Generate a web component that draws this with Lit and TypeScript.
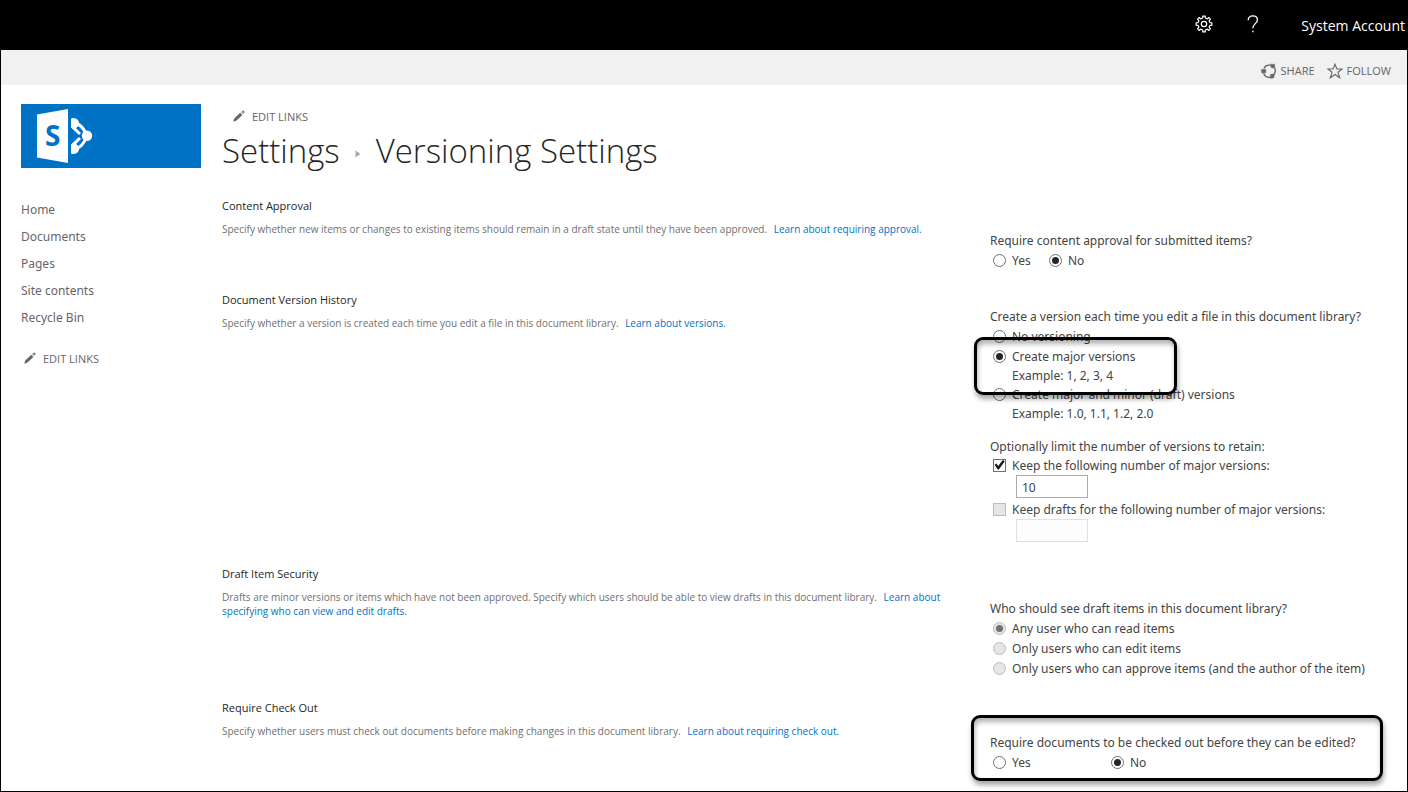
import { LitElement, html, css, svg } from "lit";
import { customElement, property } from "lit/decorators.js";

const pencil = html`<svg class="pencil" viewBox="0 0 12 12" width="12" height="12" aria-hidden="true">
  <path d="M0.2 11.8 1.3 8.4 7.2 2.7 9.4 4.9 3.5 10.6Z" fill="currentColor" />
  <path d="M8 2 8.6 1.4 10.7 3.5 10.1 4.1Z" fill="currentColor" />
  <path d="M9.1 0.9Q10 0 11 0.9 12 1.9 11.2 2.9L10.9 3.1 8.9 1.1Z" fill="currentColor" />
</svg>`;

/** Outline of a cog, centred on the origin. */
function cogPath(teeth: number, outer: number, inner: number): string {
  const step = (Math.PI * 2) / teeth;
  const at = (r: number, a: number) => `${(r * Math.cos(a)).toFixed(2)} ${(r * Math.sin(a)).toFixed(2)}`;
  let d = "";
  for (let i = 0; i < teeth; i++) {
    const a = i * step - Math.PI / 2;
    d += `${i ? "L" : "M"}${at(inner, a - step * 0.27)}L${at(outer, a - step * 0.2)}L${at(outer, a + step * 0.2)}L${at(inner, a + step * 0.27)}`;
  }
  return d + "Z";
}

@customElement("settings-section")
export class SettingsSection extends LitElement {
  static styles = css`
    :host {
      display: grid;
      grid-template-columns: minmax(0, 1fr) 417px;
      padding-bottom: 19px;
    }
    :host(:last-of-type) {
      padding-bottom: 0;
    }
    .about {
      padding-right: 40px;
    }
    h2 {
      margin: 0 0 6px;
      font-size: 11px;
      line-height: 20px;
      font-weight: 400;
      color: #262626;
    }
    p {
      margin: 0;
      font-size: 10px;
      line-height: 14px;
      color: #707070;
    }
    a {
      margin-left: 4px;
      color: #0072c6;
      text-decoration: none;
    }
    .controls {
      padding-top: 35px;
    }
    .controls.compact {
      padding-top: 17px;
    }
  `;
  @property() heading = "";
  @property() text = "";
  @property() link = "";
  @property({ type: Boolean }) compact = false;

  render() {
    return html`
      <div class="about">
        <h2>${this.heading}</h2>
        <p>${this.text} <a href="#">${this.link}</a></p>
      </div>
      <div class="controls ${this.compact ? "compact" : ""}"><slot></slot></div>
    `;
  }
}

@customElement("app-root")
export class AppRoot extends LitElement {
  static styles = css`
    * {
      box-sizing: border-box;
    }
    :host {
      display: block;
      box-sizing: border-box;
      min-height: 100vh;
      border: 1px solid #000;
      background: #fff;
      color: #444;
      font-family: "Open Sans", "Noto Sans", sans-serif;
      font-size: 12px;
      line-height: 20px;
    }
    button {
      font: inherit;
      color: inherit;
      background: none;
      border: 0;
      padding: 0;
    }
    a {
      color: inherit;
      text-decoration: none;
    }
    svg {
      display: block;
    }
    .suite {
      display: flex;
      justify-content: flex-end;
      align-items: center;
      height: 49px;
      padding-right: 2px;
      background: #000;
      color: #fff;
      font-size: 14px;
    }
    .suite .gear {
      margin-right: 34px;
      padding-bottom: 4px;
    }
    .suite .help {
      margin-right: 42px;
      padding-bottom: 4px;
    }
    .ribbon {
      display: flex;
      justify-content: flex-end;
      align-items: center;
      gap: 12px;
      height: 35px;
      padding: 7px 16px 0 0;
      background: #f1f1f1;
      color: #666;
      font-size: 11px;
    }
    .ribbon button {
      display: flex;
      align-items: center;
      gap: 4px;
    }
    .page {
      display: grid;
      grid-template-columns: 180px minmax(0, 1fr);
      column-gap: 21px;
      padding: 19px 0 0 20px;
    }
    .logo {
      display: block;
      height: 64px;
      background: #0072c6;
    }
    nav ul {
      list-style: none;
      margin: 28px 0 0;
      padding: 0;
      font-family: "Noto Sans", sans-serif;
      color: #666;
      line-height: 27px;
    }
    .edit {
      display: flex;
      align-items: center;
      gap: 7px;
      font-size: 11px;
      color: #666;
    }
    nav .edit {
      margin: 18px 0 0 3px;
    }
    .edit svg {
      margin-bottom: 2px;
    }
    .head .edit {
      margin: 3px 0 0 11px;
    }
    h1 {
      display: flex;
      align-items: center;
      gap: 15px;
      margin: 0 0 21px;
      font-size: 33px;
      line-height: 48px;
      font-weight: 300;
      color: #262626;
    }
    h1 svg {
      margin-top: 6px;
    }
    fieldset {
      position: relative;
      margin: 0;
      padding: 0;
      border: 0;
      min-width: 0;
      font-family: "Noto Sans", sans-serif;
    }
    fieldset + fieldset {
      margin-top: 14px;
    }
    legend {
      padding: 0;
      line-height: 20px;
    }
    .row {
      display: flex;
      align-items: center;
      line-height: 20px;
    }
    .row.tight {
      line-height: 18px;
    }
    .opt {
      display: flex;
      align-items: center;
      gap: 6px;
      padding-left: 3px;
    }
    .near {
      width: 56px;
    }
    .far {
      width: 118px;
    }
    .example {
      padding-left: 22px;
      line-height: 18px;
    }
    .field {
      padding: 0 0 3px 26px;
    }
    .option {
      position: relative;
    }
    input[type="radio"],
    input[type="checkbox"] {
      appearance: none;
      display: grid;
      place-items: center;
      width: 13px;
      height: 13px;
      margin: 0 0 2px;
      border: 1px solid #707070;
      background: #fff;
    }
    input[type="radio"] {
      border-radius: 50%;
    }
    input[type="radio"]:checked::before {
      content: "";
      width: 7px;
      height: 7px;
      border-radius: 50%;
      background: #262626;
    }
    input[type="checkbox"]:checked::before {
      content: "";
      width: 11px;
      height: 11px;
      background: #1a1a1a;
      clip-path: polygon(5% 48%, 22% 36%, 38% 60%, 80% 4%, 98% 16%, 44% 92%, 34% 92%);
    }
    input[type="radio"]:disabled,
    input[type="checkbox"]:disabled {
      border-color: #bcbcbc;
      background: #e6e6e6;
    }
    input[type="radio"]:disabled:checked::before {
      background: #707070;
    }
    input[type="text"] {
      display: block;
      width: 72px;
      height: 23px;
      padding: 2px 5px 0;
      border: 1px solid #ababab;
      background: #fff;
      color: #444;
      font: 12px "Noto Sans", sans-serif;
    }
    input[type="text"]:disabled {
      border-color: #e1e1e1;
      background: #fdfdfd;
    }
    .callout {
      position: absolute;
      pointer-events: none;
      border: 3px solid #000;
      border-radius: 9px;
      box-shadow: 1px 4px 5px rgba(0, 0, 0, 0.35), inset 1px 4px 5px rgba(0, 0, 0, 0.3);
    }
    .callout.major {
      inset: -10px auto -10px -16px;
      width: 203px;
    }
    .callout.checkout {
      inset: -38px 24px -8px -19px;
    }
  `;

  private choice(type: "radio" | "checkbox", name: string, label: string, checked = false, disabled = false) {
    return html`<label class="opt"
      ><input type=${type} name=${name} ?checked=${checked} ?disabled=${disabled} /><span>${label}</span></label
    >`;
  }

  render() {
    return html`
      <header class="suite">
        <button class="gear" aria-label="Settings">
          <svg width="18" height="18" viewBox="-9 -9 18 18" fill="none" stroke="#fff" stroke-width="1.2">
            ${svg`<path d=${cogPath(8, 8, 6.1)} stroke-linejoin="round" />`}
            <circle r="2.7" />
          </svg>
        </button>
        <button class="help" aria-label="Help">
          <svg width="12" height="18" viewBox="0 0 12 18" fill="none" stroke="#fff" stroke-width="1.3">
            <path d="M1.2 5.2C1.2 2.4 3.2 0.9 5.8 0.9 8.5 0.9 10.4 2.4 10.4 4.9 10.4 8.6 5.9 8.8 5.9 13.2" />
            <path d="M5.2 16.5H6.6" stroke-width="1.5" />
          </svg>
        </button>
        <button>System Account</button>
      </header>
      <div class="ribbon">
        <button>
          <svg width="16" height="16" viewBox="0 0 16 16" fill="none" stroke="#666" stroke-width="1.4" aria-hidden="true">
            <path d="M3 5.2C4 3 6.2 1.9 9 2.2M13.8 5.2C14.8 7.6 14.4 10 12.6 12M9 14.3C6 14.6 3.8 13 2.7 10.4" />
            <g fill="#666" stroke="none">
              <path d="M0.4 6.6 4.6 6.2 4.9 9.6 1 10.2Z" stroke="#666" stroke-width="0.6" stroke-linejoin="round" />
              <path d="M9.4 1.2 13.6 1.4 13.8 5.2 10.2 4.6Z" stroke="#666" stroke-width="0.6" stroke-linejoin="round" />
              <path d="M9.6 11.4 13.2 11 12.8 14.8 9.2 15.2Z" stroke="#666" stroke-width="0.6" stroke-linejoin="round" />
            </g>
          </svg>
          SHARE
        </button>
        <button>
          <svg width="16" height="16" viewBox="0 0 16 16" fill="none" stroke="#666" stroke-width="1.1" aria-hidden="true">
            <path d="M8 1.2 9.9 6H15.2L11 9.3 12.7 14.8 8 11.5 3.3 14.8 5 9.3 0.8 6H6.1Z" />
          </svg>
          FOLLOW
        </button>
      </div>
      <div class="page">
        <nav>
          <a class="logo" href="#" aria-label="Home site">
            <svg width="80" height="64" viewBox="0 0 80 64">
              <path d="M16 10.5 47 5V59L16 53.5Z" fill="#fff" />
              <text x="24" y="42" font-family="Open Sans" font-size="28" font-weight="700" fill="#0072c6">S</text>
              <path d="M55 19Q62 22 65 30M55 45Q62 42 65 34" stroke="#fff" stroke-width="3" fill="none" />
              <g fill="#fff">
                <circle cx="66" cy="31.800" r="5.200" />
                <path d="M50 14.500Q54 13 57 16 59 19.500 57 22.500L55 24 60 29 58 31 50 23.500Z" />
                <path d="M50 49.500Q54 51 57 48 59 44.500 57 41.500L55 40 60 35 58 33 50 40.500Z" />
              </g>
            </svg>
          </a>
          <ul>
            ${["Home", "Documents", "Pages", "Site contents", "Recycle Bin"].map(
              (n) => html`<li><a href="#">${n}</a></li>`
            )}
          </ul>
          <button class="edit">${pencil}EDIT LINKS</button>
        </nav>
        <main>
          <div class="head">
            <button class="edit">${pencil}EDIT LINKS</button>
            <h1>
              <a href="#">Settings</a>
              <svg width="6" height="8" viewBox="0 0 6 8" aria-hidden="true"><path d="M0.500 0.500 5.500 4 0.500 7.500Z" fill="#ababab" /></svg>
              <span>Versioning Settings</span>
            </h1>
          </div>

          <settings-section
            heading="Content Approval"
            text="Specify whether new items or changes to existing items should remain in a draft state until they have been approved."
            link="Learn about requiring approval."
          >
            <fieldset>
              <legend>Require content approval for submitted items?</legend>
              <div class="row">
                <div class="near">${this.choice("radio", "approval", "Yes")}</div>
                ${this.choice("radio", "approval", "No", true)}
              </div>
            </fieldset>
          </settings-section>

          <settings-section
            compact
            heading="Document Version History"
            text="Specify whether a version is created each time you edit a file in this document library."
            link="Learn about versions."
          >
            <fieldset>
              <legend>Create a version each time you edit a file in this document library?</legend>
              <div class="row">${this.choice("radio", "version", "No versioning")}</div>
              <div class="option">
                <div class="row">${this.choice("radio", "version", "Create major versions", true)}</div>
                <div class="example">Example: 1, 2, 3, 4</div>
                <div class="callout major"></div>
              </div>
              <div class="row">${this.choice("radio", "version", "Create major and minor (draft) versions")}</div>
              <div class="example">Example: 1.0, 1.1, 1.2, 2.0</div>
            </fieldset>
            <fieldset>
              <legend>Optionally limit the number of versions to retain:</legend>
              <div class="row tight">${this.choice("checkbox", "major", "Keep the following number of major versions:", true)}</div>
              <div class="field"><input type="text" aria-label="Number of major versions" value="10" /></div>
              <div class="row tight">
                ${this.choice("checkbox", "drafts", "Keep drafts for the following number of major versions:", false, true)}
              </div>
              <div class="field"><input type="text" aria-label="Number of versions with drafts" disabled /></div>
            </fieldset>
          </settings-section>

          <settings-section
            heading="Draft Item Security"
            text="Drafts are minor versions or items which have not been approved. Specify which users should be able to view drafts in this document library."
            link="Learn about specifying who can view and edit drafts."
          >
            <fieldset>
              <legend>Who should see draft items in this document library?</legend>
              <div class="row">${this.choice("radio", "drafts-who", "Any user who can read items", true, true)}</div>
              <div class="row">${this.choice("radio", "drafts-who", "Only users who can edit items", false, true)}</div>
              <div class="row">
                ${this.choice("radio", "drafts-who", "Only users who can approve items (and the author of the item)", false, true)}
              </div>
            </fieldset>
          </settings-section>

          <settings-section
            heading="Require Check Out"
            text="Specify whether users must check out documents before making changes in this document library."
            link="Learn about requiring check out."
          >
            <fieldset>
              <legend>Require documents to be checked out before they can be edited?</legend>
              <div class="row">
                <div class="far">${this.choice("radio", "checkout", "Yes")}</div>
                ${this.choice("radio", "checkout", "No", true)}
              </div>
              <div class="callout checkout"></div>
            </fieldset>
          </settings-section>
        </main>
      </div>
    `;
  }
}
